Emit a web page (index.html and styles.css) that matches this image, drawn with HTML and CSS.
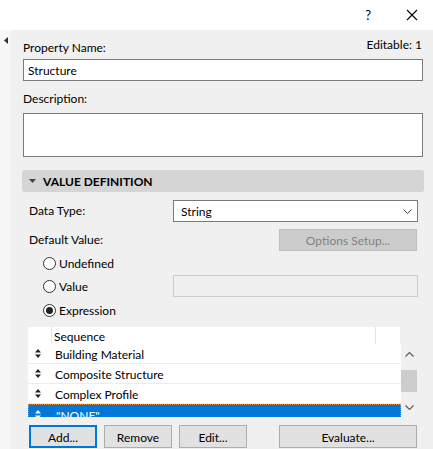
FILE: index.html
```html
<!DOCTYPE html>
<html>
<head>
<meta charset="utf-8">
<link rel="stylesheet" href="styles.css">
</head>
<body>
<div class="titlebar">
  <span class="help">?</span>
  <svg class="close" width="12" height="12" viewBox="0 0 12 12"><path d="M1 1L11 11M11 1L1 11" stroke="#000" stroke-width="1.1" fill="none"/></svg>
</div>
<div class="main">
  <div class="sidebar">
    <svg class="side-tri" width="4" height="7" viewBox="0 0 4 7"><path d="M4 0L0 3.5L4 7Z" fill="#333"/></svg>
  </div>
  <div class="content">
    <div class="name-head">
      <span class="label name-label">Property Name:</span>
      <span class="label">Editable: 1</span>
    </div>
    <div class="textbox">Structure</div>
    <div class="label desc-label">Description:</div>
    <div class="textarea"></div>
    <div class="section-head">
      <svg class="sec-tri" width="7" height="4" viewBox="0 0 7 4"><path d="M0 0H7L3.5 4Z" fill="#444"/></svg>
      <span>VALUE DEFINITION</span>
    </div>
    <div class="row datatype">
      <span class="label">Data Type:</span>
      <div class="select">
        <span>String</span>
        <svg width="9" height="5" viewBox="0 0 9 5"><path d="M0.5 0.5L4.5 4.5L8.5 0.5" stroke="#444" stroke-width="1" fill="none"/></svg>
      </div>
    </div>
    <div class="row defval">
      <span class="label">Default Value:</span>
      <div class="btn disabled options">Options Setup...</div>
    </div>
    <div class="radios">
      <div class="radio-row r1"><span class="radio"></span><span class="label">Undefined</span></div>
      <div class="radio-row r2"><span class="radio"></span><span class="label">Value</span><div class="valuebox"></div></div>
      <div class="radio-row r3"><span class="radio checked"></span><span class="label">Expression</span></div>
    </div>
    <div class="table">
      <div class="thead">
        <div class="th c1"></div>
        <div class="th c2">Sequence</div>
        <div class="th c3"></div>
      </div>
      <div class="tbody">
        <div class="rows">
          <div class="tr"><span class="ud"><svg width="6" height="9" viewBox="0 0 6 9"><path d="M3 0L6 3.5H0Z M0 5.5H6L3 9Z" fill="#222"/></svg></span><span>Building Material</span></div>
          <div class="tr"><span class="ud"><svg width="6" height="9" viewBox="0 0 6 9"><path d="M3 0L6 3.5H0Z M0 5.5H6L3 9Z" fill="#222"/></svg></span><span>Composite Structure</span></div>
          <div class="tr"><span class="ud"><svg width="6" height="9" viewBox="0 0 6 9"><path d="M3 0L6 3.5H0Z M0 5.5H6L3 9Z" fill="#222"/></svg></span><span>Complex Profile</span></div>
          <div class="tr sel"><span class="ud"><svg width="6" height="9" viewBox="0 0 6 9"><path d="M3 0L6 3.5H0Z M0 5.5H6L3 9Z" fill="#fff"/></svg></span><span>"NONE"</span></div>
        </div>
        <div class="scrollbar">
          <svg class="sb-up" width="9" height="5" viewBox="0 0 9 5"><path d="M0.5 4.5L4.5 0.5L8.5 4.5" stroke="#606060" stroke-width="1.2" fill="none"/></svg>
          <div class="thumb"></div>
          <svg class="sb-down" width="9" height="5" viewBox="0 0 9 5"><path d="M0.5 0.5L4.5 4.5L8.5 0.5" stroke="#606060" stroke-width="1.2" fill="none"/></svg>
        </div>
      </div>
    </div>
    <div class="buttons">
      <div class="btn focus">Add...</div>
      <div class="btn">Remove</div>
      <div class="btn">Edit...</div>
      <div class="btn evaluate">Evaluate...</div>
    </div>
  </div>
</div>
</body>
</html>
```
FILE: styles.css
```css
* { box-sizing: border-box; }
html, body { margin: 0; padding: 0; }
body {
  width: 433px;
  height: 449px;
  overflow: hidden;
  background: #f0f0f0;
  font-family: "Segoe UI", Lato, "Noto Sans", sans-serif;
  font-size: 12px;
  color: #000;
}
.titlebar {
  height: 30px;
  background: #fff;
  display: flex;
  align-items: center;
  justify-content: flex-end;
  padding-right: 15px;
}
.help { font-size: 13px; margin-right: 35px; margin-top: -1px; }
.close { margin-top: -1px; }
.main { display: flex; height: 419px; }
.sidebar {
  width: 11px;
  background: #f7f7f7;
  padding: 7px 0 0 4px;
}
.side-tri { display: block; }
.content {
  flex: 1;
  background: #f0f0f0;
  padding: 0 10px 0 12px;
}
.label { line-height: 16px; white-space: nowrap; }
.name-head {
  height: 29px;
  display: flex;
  justify-content: space-between;
  padding-top: 7px;
  padding-right: 1px;
}
.name-label { margin-top: 3px; }
.textbox {
  height: 22px;
  border: 1px solid #7a7a7a;
  background: #fff;
  padding: 1px 0 0 4px;
  line-height: 19px;
}
.desc-label { margin-top: 9px; padding-top: 1px; }
.textarea {
  margin-top: 6px;
  height: 44px;
  border: 1px solid #7a7a7a;
  background: #fff;
}
.section-head {
  margin: 13px -1px 0 -1px;
  height: 22px;
  background: #d5d5d5;
  border-radius: 3px;
  display: flex;
  align-items: center;
  padding-left: 7px;
  padding-top: 1px;
  font-weight: bold;
}
.sec-tri { margin-right: 7px; margin-top: -1px; }
.row {
  display: flex;
  align-items: center;
  justify-content: space-between;
  padding-left: 6px;
}
.datatype { margin-top: 8px; padding-right: 5px; }
.select {
  width: 245px;
  height: 22px;
  border: 1px solid #7a7a7a;
  background: #fff;
  display: flex;
  align-items: center;
  justify-content: space-between;
  padding: 1px 5px 0 7px;
}
.defval { margin-top: 7px; padding-right: 6px; }
.btn {
  height: 23px;
  border: 1px solid #adadad;
  background: #e1e1e1;
  display: flex;
  align-items: center;
  justify-content: center;
  white-space: nowrap;
  padding-top: 1px;
}
.btn.disabled {
  background: #cccccc;
  border-color: #bfbfbf;
  color: #838383;
  height: 22px;
}
.options { width: 138px; }
.radios { padding-left: 20px; padding-right: 5px; }
.radio-row { display: flex; align-items: center; height: 22px; }
.radio-row .label { padding-top: 1px; }
.r1 { height: 23px; margin-top: 1px; }
.r3 { margin-top: 2px; }
.radio {
  width: 13px;
  height: 13px;
  border: 1px solid #333;
  border-radius: 50%;
  background: #fff;
  margin-right: 3px;
  display: flex;
  align-items: center;
  justify-content: center;
}
.radio.checked::after {
  content: "";
  width: 7px;
  height: 7px;
  border-radius: 50%;
  background: #222;
}
.valuebox {
  margin-left: auto;
  width: 245px;
  height: 22px;
  border: 1px solid #cccccc;
  background: #f0f0f0;
}
.table { margin: 6px 6px 0 5px; }
.thead { display: flex; height: 17px; width: 372px; background: #fff; }
.th { line-height: 16px; padding-top: 2px; }
.c1 { width: 24px; border-right: 1px solid #e5e5e5; }
.c2 { width: 324px; padding-left: 2px; border-right: 1px solid #e5e5e5; }
.c3 { flex: 1; }
.tbody { display: flex; height: 73px; }
.rows { width: 373px; overflow: hidden; }
.tr {
  height: 20px;
  background: #fff;
  border-bottom: 1px solid #ececec;
  display: flex;
  align-items: center;
  padding-top: 2px;
}
.tr .ud { width: 27px; padding-left: 7px; display: flex; margin-top: -2px; }
.tr.sel {
  background: #0078d7;
  color: #fff;
  border-top: 1px dotted #e08a3c;
  border-left: 1px dotted #e08a3c;
  border-right: 1px dotted #e08a3c;
}
.tr.sel .ud { padding-left: 6px; }
.scrollbar {
  width: 16px;
  display: flex;
  flex-direction: column;
  align-items: center;
}
.sb-up { margin-top: 8px; }
.thumb { width: 16px; height: 22px; background: #cdcdcd; margin-top: 13px; }
.sb-down { margin-top: 13px; }
.buttons {
  display: flex;
  margin: 8px 6px 0 6px;
  gap: 7px;
}
.buttons .btn { width: 68px; }
.btn.focus { border: 2px solid #0078d7; }
.buttons .evaluate { width: 138px; margin-left: auto; }
```
